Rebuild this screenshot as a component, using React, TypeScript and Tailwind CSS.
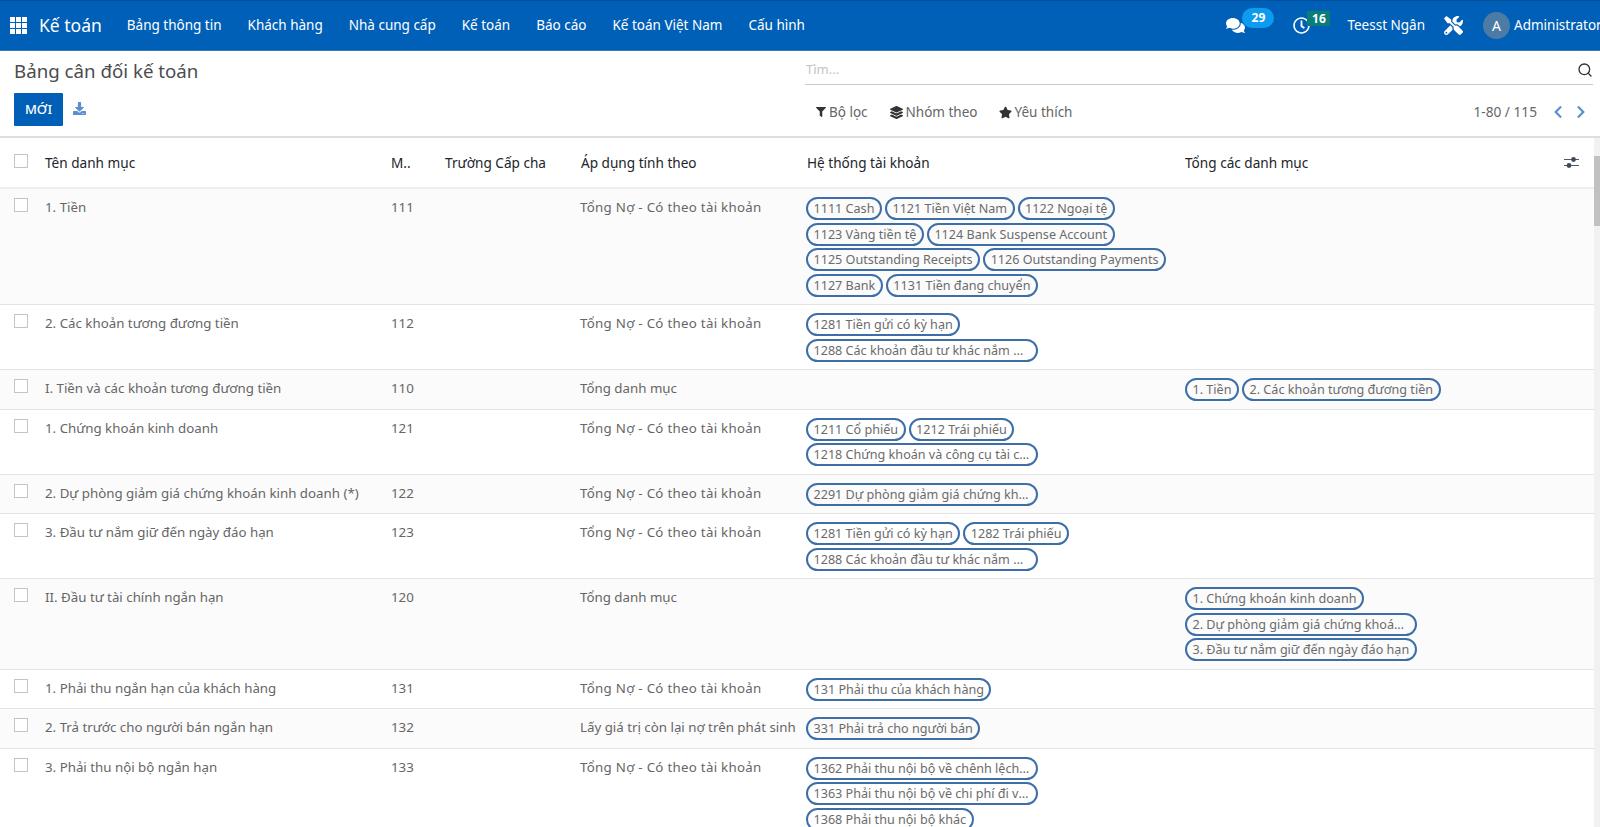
import { FaComments, FaDownload, FaFilter, FaLayerGroup, FaStar, FaTools, FaChevronLeft, FaChevronRight, FaRegClock } from "react-icons/fa";
import { Search } from "lucide-react";

const menu = ["Bảng thông tin", "Khách hàng", "Nhà cung cấp", "Kế toán", "Báo cáo", "Kế toán Việt Nam", "Cấu hình"];

const DEBIT = "Tổng Nợ - Có theo tài khoản";
const SUM = "Tổng danh mục";

type Row = { name: string; code: string; apply: string; accounts?: string[]; totals?: string[] };

const rows: Row[] = [
  {
    name: "1. Tiền",
    code: "111",
    apply: DEBIT,
    accounts: ["1111 Cash", "1121 Tiền Việt Nam", "1122 Ngoại tệ", "1123 Vàng tiền tệ", "1124 Bank Suspense Account", "1125 Outstanding Receipts", "1126 Outstanding Payments", "1127 Bank", "1131 Tiền đang chuyển"],
  },
  { name: "2. Các khoản tương đương tiền", code: "112", apply: DEBIT, accounts: ["1281 Tiền gửi có kỳ hạn", "1288 Các khoản đầu tư khác nắm giữ đến ngày đáo hạn"] },
  { name: "I. Tiền và các khoản tương đương tiền", code: "110", apply: SUM, totals: ["1. Tiền", "2. Các khoản tương đương tiền"] },
  { name: "1. Chứng khoán kinh doanh", code: "121", apply: DEBIT, accounts: ["1211 Cổ phiếu", "1212 Trái phiếu", "1218 Chứng khoán và công cụ tài chính khác"] },
  { name: "2. Dự phòng giảm giá chứng khoán kinh doanh (*)", code: "122", apply: DEBIT, accounts: ["2291 Dự phòng giảm giá chứng khoán kinh doanh"] },
  { name: "3. Đầu tư nắm giữ đến ngày đáo hạn", code: "123", apply: DEBIT, accounts: ["1281 Tiền gửi có kỳ hạn", "1282 Trái phiếu", "1288 Các khoản đầu tư khác nắm giữ đến ngày đáo hạn"] },
  { name: "II. Đầu tư tài chính ngắn hạn", code: "120", apply: SUM, totals: ["1. Chứng khoán kinh doanh", "2. Dự phòng giảm giá chứng khoán kinh doanh (*)", "3. Đầu tư nắm giữ đến ngày đáo hạn"] },
  { name: "1. Phải thu ngắn hạn của khách hàng", code: "131", apply: DEBIT, accounts: ["131 Phải thu của khách hàng"] },
  { name: "2. Trả trước cho người bán ngắn hạn", code: "132", apply: "Lấy giá trị còn lại nợ trên phát sinh", accounts: ["331 Phải trả cho người bán"] },
  { name: "3. Phải thu nội bộ ngắn hạn", code: "133", apply: DEBIT, accounts: ["1362 Phải thu nội bộ về chênh lệch tỷ giá", "1363 Phải thu nội bộ về chi phí đi vay đủ điều kiện", "1368 Phải thu nội bộ khác"] },
];

function Tags({ items }: { items?: string[] }) {
  if (!items) return null;
  return (
    <div className="flex flex-wrap gap-x-[3px] gap-y-[2.5px]">
      {items.map((t) => (
        <span key={t} className="h-[23px] max-w-[232px] truncate rounded-full border-2 border-[#3d6ea8] px-[5.5px] text-[12.6px] leading-[19px] text-[#6b6b6b]">
          {t}
        </span>
      ))}
    </div>
  );
}

function Checkbox() {
  return <span className="block h-[14px] w-[14px] border border-[#c4c4c4] bg-white" />;
}

function Sliders() {
  return (
    <svg width="15" height="13" viewBox="0 0 15 13">
      <path d="M0 3.5h15M0 9.5h15" stroke="#555" strokeWidth="1" />
      <circle cx="9.5" cy="3.5" r="2.4" fill="#3c4a5e" />
      <circle cx="5" cy="9.5" r="2.4" fill="#3c4a5e" />
    </svg>
  );
}

function AppsIcon() {
  return (
    <svg width="17" height="17" viewBox="0 0 17 17" fill="#fff">
      {[0, 6, 12].map((y) => [0, 6, 12].map((x) => <rect key={`${x}-${y}`} x={x} y={y} width="5" height="5" />))}
    </svg>
  );
}

const th = "border-b-2 border-[#eeeeee] px-[8px] pt-[2px] font-normal whitespace-nowrap";
const td = "border-b border-[#e4e4e4] px-[8px] pt-[8px] pb-[9.5px] align-top leading-[20px]";
const tagCell = "border-b border-[#e4e4e4] px-[8px] pt-[8px] pb-[7.5px] align-top";

export default function App() {
  return (
    <div className="flex h-screen w-full flex-col overflow-hidden bg-white font-['Noto_Sans','Open_Sans',sans-serif] text-[13.3px] text-[#666]">
      {/* Top bar */}
      <header className="flex h-[51px] shrink-0 items-center border-y border-t-[#004f9a] border-b-[#3f78b5] bg-[#005fb7] text-white">
        <div className="ml-[10px]">
          <AppsIcon />
        </div>
        <span className="ml-[12px] text-[17.5px]">Kế toán</span>
        <nav className="ml-[12px] flex">
          {menu.map((m) => (
            <a key={m} className="px-[13px] text-[13.5px]">
              {m}
            </a>
          ))}
        </nav>
        <div className="ml-auto flex items-center">
          <div className="relative mr-[48px]">
            <FaComments className="text-[19px]" />
            <span className="absolute -top-[8px] left-[16px] flex h-[20px] w-[32px] items-center justify-center rounded-full bg-[#0d9bf0] text-[12px] font-bold">29</span>
          </div>
          <div className="relative mr-[37px]">
            <FaRegClock className="text-[17px]" />
            <span className="absolute -top-[6px] left-[14px] flex h-[15px] w-[23px] items-center justify-center bg-[#0a7d78] text-[12px] font-bold">16</span>
          </div>
          <span className="text-[13.5px]">Teesst Ngân</span>
          <FaTools className="ml-[19px] text-[19px]" />
          <span className="ml-[20px] flex h-[27px] w-[27px] items-center justify-center rounded-full bg-[#4c7ca6] text-[14px]">A</span>
          <span className="ml-[4px] w-[86px] overflow-hidden whitespace-nowrap text-[13.5px]">Administrator</span>
        </div>
      </header>

      {/* Control panel */}
      <div className="flex h-[87px] shrink-0 border-b-2 border-[#dedede]">
        <div className="w-[805px] pl-[14px]">
          <h1 className="mt-[6px] text-[18.7px] leading-[28px] text-[#4c4c4c]">Bảng cân đối kế toán</h1>
          <div className="mt-[8px] flex items-center">
            <button className="h-[33px] w-[49px] rounded-[1px] bg-[#005fb7] text-[13px] font-medium text-white">MỚI</button>
            <FaDownload className="ml-[10px] mb-[2px] text-[13px] text-[#5b8fd0]" />
          </div>
        </div>
        <div className="flex-1 pr-[7px]">
          <div className="flex h-[34px] items-center justify-between border-b border-[#c9c9d3] pt-[5px]">
            <span className="ml-[1px] text-[13px] text-[#c4c4c4]">Tìm...</span>
            <Search className="h-[16px] w-[16px] text-[#333]" strokeWidth={2} />
          </div>
          <div className="mt-[17px] flex items-center text-[13.5px] text-[#666]">
            <span className="ml-[11px] flex items-center gap-[3px]">
              <FaFilter className="text-[10px] text-[#333]" />
              Bộ lọc
            </span>
            <span className="ml-[22px] flex items-center gap-[3px]">
              <FaLayerGroup className="text-[13px] text-[#333]" />
              Nhóm theo
            </span>
            <span className="ml-[21px] flex items-center gap-[3px]">
              <FaStar className="text-[13px] text-[#333]" />
              Yêu thích
            </span>
            <span className="ml-auto text-[13.7px]">1-80 / 115</span>
            <FaChevronLeft className="ml-[14px] text-[14px] text-[#5b8fd0]" />
            <FaChevronRight className="ml-[9px] mr-[5px] text-[14px] text-[#5b8fd0]" />
          </div>
        </div>
      </div>

      {/* List */}
      <div className="flex min-h-0 flex-1">
        <div className="min-w-0 flex-1 overflow-hidden">
          <table className="w-[1594px] table-fixed border-separate border-spacing-0">
            <colgroup>
              <col className="w-[37px]" />
              <col className="w-[346px]" />
              <col className="w-[54px]" />
              <col className="w-[135px]" />
              <col className="w-[226px]" />
              <col className="w-[379px]" />
              <col className="w-[340px]" />
              <col className="w-[77px]" />
            </colgroup>
            <thead>
              <tr className="h-[51px] text-left text-[13.6px] text-[#212529]">
                <th className="border-b-2 border-[#eeeeee] pl-[14px] pb-[3px] font-normal"><Checkbox /></th>
                <th className={th}>Tên danh mục</th>
                <th className={th}>M..</th>
                <th className={th}>Trường Cấp cha</th>
                <th className={th + " !pl-[9px]"}>Áp dụng tính theo</th>
                <th className={th + " !pl-[9px]"}>Hệ thống tài khoản</th>
                <th className={th}>Tổng các danh mục</th>
                <th className="border-b-2 border-[#eeeeee] pr-[15px]">
                  <div className="flex justify-end"><Sliders /></div>
                </th>
              </tr>
            </thead>
            <tbody>
              {rows.map((r, i) => (
                <tr key={r.name} className={i % 2 === 0 ? "bg-[#fbfbfb]" : "bg-white"}>
                  <td className="border-b border-[#e4e4e4] pt-[9px] pl-[14px] align-top"><Checkbox /></td>
                  <td className={td}>{r.name}</td>
                  <td className={td}>{r.code}</td>
                  <td className="border-b border-[#e4e4e4]" />
                  <td className={td + " whitespace-nowrap" + (r.apply === DEBIT ? " tracking-[0.28px]" : "")}>{r.apply}</td>
                  <td className={tagCell}><Tags items={r.accounts} /></td>
                  <td className={tagCell}><Tags items={r.totals} /></td>
                  <td className="border-b border-[#e4e4e4]" />
                </tr>
              ))}
            </tbody>
          </table>
        </div>
        {/* scrollbar */}
        <div className="w-[6px] shrink-0 bg-[#f1f1f1] pt-[18px]">
          <div className="h-[70px] bg-[#c1c1c1]" />
        </div>
      </div>
    </div>
  );
}
